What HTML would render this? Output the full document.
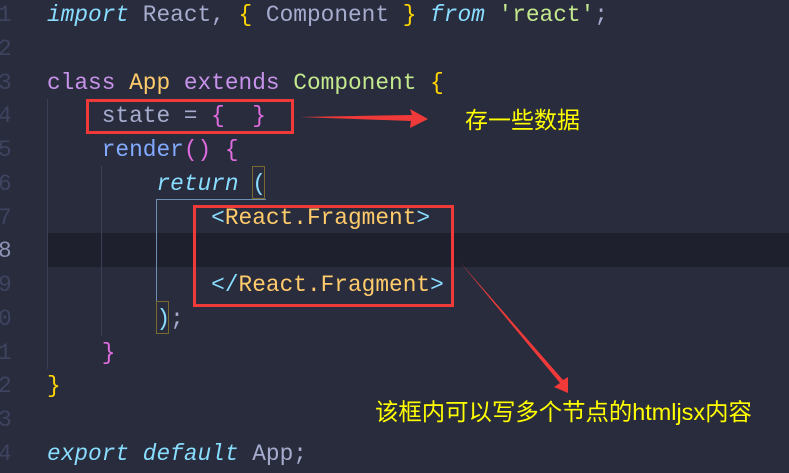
<!DOCTYPE html>
<html><head><meta charset="utf-8"><style>
body{margin:0;width:789px;height:473px;background:#292c3d;overflow:hidden;position:relative;font-family:"Liberation Mono",monospace;}
.l{position:absolute;left:47px;height:34px;line-height:34px;font-size:22.8px;color:#a6accd;white-space:pre;}
.n{position:absolute;left:-2px;height:34px;line-height:34px;font-size:22.8px;color:#3e4460;font-family:"Liberation Mono",monospace;}
.k{color:#89ddff;font-style:italic}.p{color:#c792ea}.y{color:#ffcb6b}.g{color:#c3e88d}.m{color:#e06ce0}.c{color:#89ddff}.f{color:#82aaff}.b{color:#ffd700}
.box{position:absolute;border:3px solid #f03a3a;box-sizing:border-box}
.t{position:absolute;color:#ffff00;font-family:"Liberation Sans","Noto Sans CJK SC",sans-serif;white-space:nowrap}
.gd{position:absolute;width:1px;background:#3a3f55}
</style></head><body>
<div style="position:absolute;left:47px;right:0;top:233px;height:34px;background:#1f202e"></div>
<div class="gd" style="left:47px;top:99px;height:270px"></div>
<div class="gd" style="left:101px;top:166px;height:170px"></div>
<div style="position:absolute;left:156px;top:199px;width:110px;height:1px;background:#6f8fb0"></div>
<div style="position:absolute;left:156px;top:199px;width:1px;height:106px;background:#6f8fb0"></div>
<div style="position:absolute;left:252px;top:166px;width:13px;height:33px;border:1px solid #7a6a30;box-sizing:border-box"></div>
<div style="position:absolute;left:156px;top:301px;width:13px;height:33px;border:1px solid #7a6a30;box-sizing:border-box"></div>
<div class="n" style="top:-2px">1</div><div class="n" style="top:32px">2</div><div class="n" style="top:66px">3</div><div class="n" style="top:99px">4</div><div class="n" style="top:133px">5</div><div class="n" style="top:167px">6</div><div class="n" style="top:201px">7</div><div class="n" style="top:234px;color:#8c93b3">8</div><div class="n" style="top:268px">9</div><div class="n" style="top:302px">0</div><div class="n" style="top:336px">1</div><div class="n" style="top:369px">2</div><div class="n" style="top:403px">3</div><div class="n" style="top:437px">4</div>
<div class="l" style="top:-2px"><span class="k">import</span> React, <span class="b">{</span> Component <span class="b">}</span> <span class="k">from</span> <span class="g">'react'</span>;</div>
<div class="l" style="top:66px"><span class="p">class</span> <span class="y">App</span> <span class="p">extends</span> <span class="g">Component</span> <span class="b">{</span></div>
<div class="l" style="top:99px">    state = <span class="m">{  }</span></div>
<div class="l" style="top:133px">    <span class="f">render</span><span class="m">()</span> <span class="m">{</span></div>
<div class="l" style="top:167px">        <span class="k">return</span> <span class="c">(</span></div>
<div class="l" style="top:201px">            <span class="c">&lt;</span><span class="y">React.Fragment</span><span class="c">&gt;</span></div>
<div class="l" style="top:268px">            <span class="c">&lt;/</span><span class="y">React.Fragment</span><span class="c">&gt;</span></div>
<div class="l" style="top:302px">        <span class="c">)</span>;</div>
<div class="l" style="top:336px">    <span class="m">}</span></div>
<div class="l" style="top:369px"><span class="b">}</span></div>
<div class="l" style="top:437px"><span class="k">export</span> <span class="k">default</span> App;</div>
<div class="box" style="left:86px;top:99px;width:208px;height:35px"></div>
<div class="box" style="left:193px;top:205px;width:261px;height:102px"></div>
<svg style="position:absolute;left:0;top:0" width="789" height="473">
<polygon points="300,117 412,115 410,109 428,119 410,128 411,121" fill="#f03a3a"/>
<polygon points="459,261 563,380 568,377 568,393 554,387 560,383" fill="#f03a3a"/>
</svg>
<div class="t" style="left:465px;top:101px;font-size:23px">存一些数据</div>
<div class="t" style="left:375px;top:393px;font-size:23.4px">该框内可以写多个节点的htmljsx内容</div>
</body></html>
